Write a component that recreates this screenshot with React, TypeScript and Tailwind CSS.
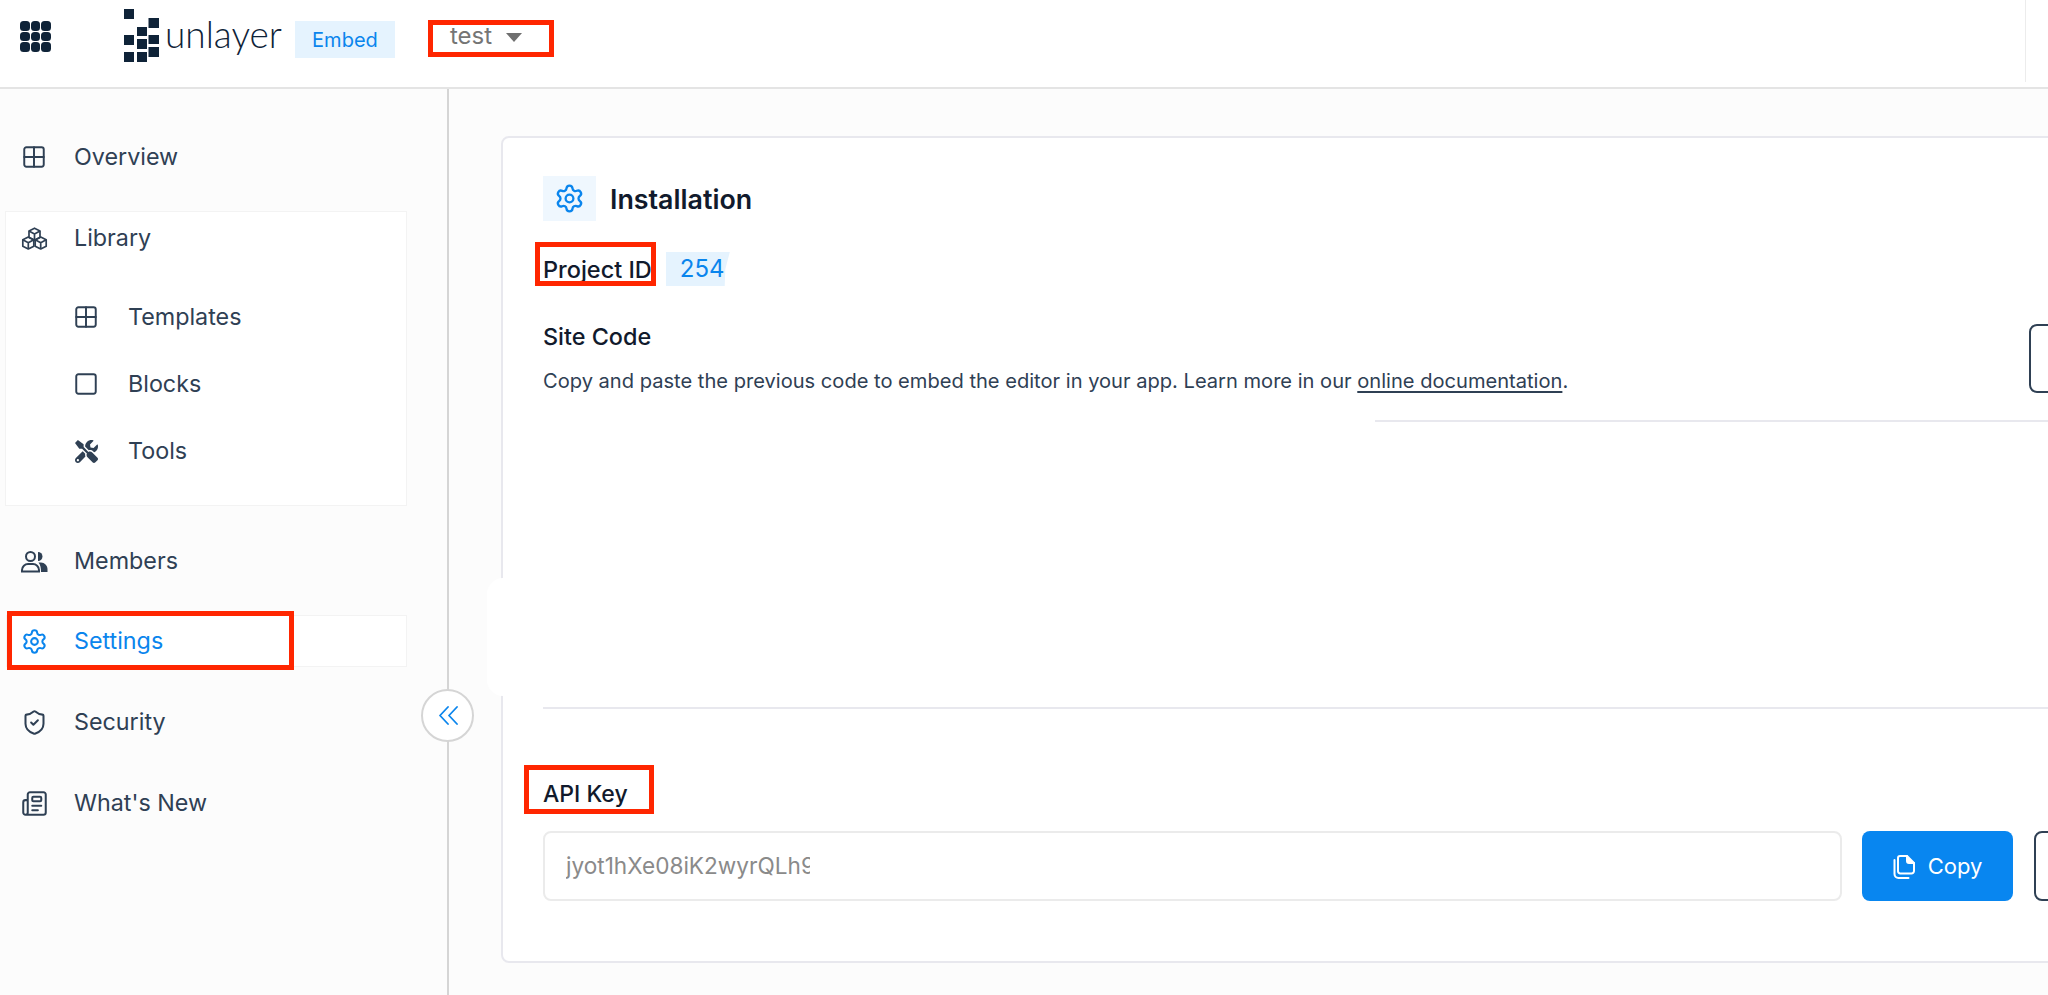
import { Grid2x2, Square, Settings, ShieldCheck, Newspaper } from "lucide-react";
import { FaTools } from "react-icons/fa";
import type { ReactNode } from "react";

function Row({ icon, label, active, sub }: { icon: ReactNode; label: string; active?: boolean; sub?: boolean }) {
  return (
    <div className={`flex items-center h-[52px] ${sub ? "pl-[68px] gap-[30px]" : active ? "pl-[15px] gap-[28px] -mt-px" : "pl-[16px] gap-[28px]"} ${active ? "text-[#0a85ed] bg-white border border-[#f3f3f3]" : "text-[#2f4054]"}`}>
      <span className="w-[24px] h-[24px] flex items-center justify-center shrink-0 [&>svg]:shrink-0">{icon}</span>
      <span className="text-[23.300px] leading-[28px]">{label}</span>
    </div>
  );
}

function MembersIcon() {
  return (
    <svg width="27" height="23" viewBox="0 0 27 23" fill="none" stroke="currentColor" strokeWidth="2">
      <circle cx="9.500" cy="6.500" r="4.500" />
      <path d="M1 21.500v-1.500c0-3.500 3-6 6-6h5c3 0 6 2.500 6 6v1.500z" />
      <path d="M17 2a4.500 4.500 0 0 1 0 9z" fill="currentColor" stroke="none" />
      <path d="M17.500 12.500h2.500c3.500 0 6.500 3 6.500 6.500v3H20c0-4-.500-7-2.500-9.500z" fill="currentColor" stroke="none" />
    </svg>
  );
}

function CubesIcon() {
  const centers = [[13.500, 7.200], [7.300, 16], [19.700, 16]];
  return (
    <svg width="27" height="23" viewBox="0 0 27 23" fill="none" stroke="currentColor" strokeWidth="1.700" strokeLinejoin="round">
      {centers.map(([x, y], i) => (
        <g key={i}>
          <path d={`M${x} ${y - 6}l5.500 2.800v6.400l-5.500 2.800-5.500-2.800v-6.400z`} />
          <path d={`M${x - 5.500} ${y - 3.200}l5.500 2.900 5.500-2.900M${x} ${y - 0.300}v6.300`} />
        </g>
      ))}
    </svg>
  );
}

function ChevronsIcon() {
  return (
    <svg width="20" height="19" viewBox="0 0 20 19" fill="none" stroke="currentColor" strokeWidth="1.800" strokeLinecap="round" strokeLinejoin="round" className="shrink-0">
      <path d="M10 1L2 9.500l8 8.500" />
      <path d="M19 1l-8 8.500 8 8.500" />
    </svg>
  );
}

function CopyIcon() {
  return (
    <svg width="22" height="25" viewBox="0 0 22 25" fill="none" stroke="currentColor" strokeWidth="2" strokeLinejoin="round" strokeLinecap="round" className="shrink-0">
      <path d="M7 2h7l7 7v8a2.500 2.500 0 0 1-2.500 2.500h-11.500A2.500 2.500 0 0 1 5 17V4a2 2 0 0 1 2-2z" />
      <path d="M14 2v5a2 2 0 0 0 2 2h5" fill="currentColor" />
      <path d="M1.500 6v14a4 4 0 0 0 4 4h10" />
    </svg>
  );
}

function Logo() {
  const squares = [
    [124, 9, 10, 10], [148.500, 18, 10.500, 10], [137, 27, 10, 9], [148.500, 35, 10.500, 9],
    [124, 35, 10, 10], [137, 39, 10, 10], [148.500, 47, 10.500, 10], [124, 52, 10, 10], [137, 52, 10, 10],
  ];
  return (
    <svg width="36" height="53" viewBox="124 9 36 53" className="shrink-0" fill="#0f2338">
      {squares.map((s, i) => (
        <rect key={i} x={s[0]} y={s[1]} width={s[2]} height={s[3]} />
      ))}
    </svg>
  );
}

export default function App() {
  return (
    <div className="relative h-[995px] w-[2048px] overflow-hidden bg-[#fcfcfc] font-['Inter',sans-serif]">
      <header className="h-[89px] bg-white border-b-2 border-[#e4e4e4] flex items-start relative">
        <div className="grid grid-cols-3 gap-[1px] w-[31px] ml-[20px] mt-[21px]">
          {Array.from({ length: 9 }).map((_, i) => (
            <span key={i} className="w-[9.500px] h-[9.500px] rounded-[3.500px] bg-[#0f2338]" />
          ))}
        </div>
        <div className="ml-[73px] mt-[9px]"><Logo /></div>
        <span className="ml-[5px] mt-[10px] text-[37px] leading-[48px] font-['Lato',sans-serif] font-light text-[#0f2338]">unlayer</span>
        <span className="ml-[13px] mt-[21px] w-[100px] h-[37px] bg-[#e5f3fe] text-[#0a85ed] text-[20px] flex items-center justify-center">Embed</span>
        <span className="ml-[55px] mt-[20px] text-[24px] leading-[32px] text-[#757575]">test</span>
        <span className="ml-[14px] mt-[33px] w-0 h-0 border-l-[8px] border-r-[8px] border-t-[9px] border-l-transparent border-r-transparent border-t-[#6f6f6f]" />
        <span className="absolute left-[2025px] top-0 h-[82px] w-px bg-[#ececec]" />
      </header>

      <div className="flex h-[906px]">
        <aside className="w-[449px] shrink-0 border-r-2 border-[#d5d5d5] pt-[42px] pl-[6px] pr-[40px] flex flex-col gap-[29px]">
          <Row icon={<Grid2x2 size={26} strokeWidth={1.800} />} label="Overview" />
          <div className="h-[295px] -mt-px bg-white border border-[#f3f3f3] -ml-px">
            <Row icon={<CubesIcon />} label="Library" />
            <div className="mt-[27px] flex flex-col gap-[15px]">
              <Row sub icon={<Grid2x2 size={26} strokeWidth={1.800} />} label="Templates" />
              <Row sub icon={<Square size={26} strokeWidth={1.800} />} label="Blocks" />
              <Row sub icon={<FaTools size={23} />} label="Tools" />
            </div>
          </div>
          <Row icon={<MembersIcon />} label="Members" />
          <Row active icon={<Settings size={27} strokeWidth={1.800} />} label="Settings" />
          <Row icon={<ShieldCheck size={27} strokeWidth={1.800} />} label="Security" />
          <Row icon={<Newspaper size={27} strokeWidth={1.800} />} label="What's New" />
        </aside>

        <main className="flex-1 min-w-0 pl-[52px] pt-[47px]">
          <section className="w-[1700px] h-[827px] bg-white border-2 border-[#e8e8ee] rounded-[8px] pl-[40px] pt-[38px]">
            <div className="flex items-center gap-[14px]">
              <span className="w-[53px] h-[45px] bg-[#eff7fe] flex items-center justify-center text-[#0a85ed]">
                <Settings size={31} strokeWidth={1.800} />
              </span>
              <h1 className="text-[26.800px] leading-[32px] mt-[1px] font-semibold text-[#111a2c]">Installation</h1>
            </div>
            <div className="mt-[31px] flex items-center gap-[14px] h-[34px]">
              <span className="text-[23.500px] mt-[2px] font-medium text-[#111a2c]">Project ID</span>
              <span className="w-[64px] h-[34px] bg-[#e5f3fe] text-[#0a85ed] text-[24px] pl-[14px] flex items-center [clip-path:polygon(0_0,100%_0,93%_50%,92%_100%,0_100%)]">254</span>
            </div>
            <div className="mt-[37px] flex justify-between">
              <div>
                <h2 className="text-[23.400px] leading-[28px] font-medium text-[#111a2c]">Site Code</h2>
                <p className="mt-[16px] text-[20.100px] leading-[28px] text-[#2f4054]">
                  Copy and paste the previous code to embed the editor in your app. Learn more in our{" "}
                  <span className="underline underline-offset-[3px]">online documentation</span>.
                </p>
              </div>
              <span className="w-[100px] h-[69px] border-2 border-[#2f4054] rounded-[8px] mr-[70px] mt-px" />
            </div>
            <div className="mt-[25px] ml-[832px] h-[2px] bg-[#e8e8ee]" />
            <div className="mt-[285px] h-[2px] bg-[#e8e8ee]" />
            <h2 className="mt-[71px] text-[23px] leading-[28px] font-medium text-[#111a2c]">API Key</h2>
            <div className="mt-[23px] flex items-center gap-[20px]">
              <div className="w-[1299px] h-[70px] border-2 border-[#ebebeb] rounded-[8px] pl-[21px] flex items-center">
                <span className="block w-[244px] overflow-hidden whitespace-nowrap text-[22.600px] text-[#8a8a8a]">jyot1hXe08iK2wyrQLh9xTqLm</span>
              </div>
              <button className="w-[151px] h-[70px] rounded-[8px] bg-[#0886f0] text-white text-[22px] flex items-center justify-center gap-[13px]">
                <CopyIcon />
                Copy
              </button>
              <span className="w-[100px] h-[70px] border-2 border-[#2f4054] rounded-[8px] ml-px shrink-0" />
            </div>
          </section>
        </main>
      </div>

      <span className="absolute left-[487px] top-[578px] w-[17px] h-[118px] bg-white rounded-l-[16px]" />
      <button className="absolute left-[421px] top-[689px] w-[53px] h-[53px] rounded-full bg-white border-2 border-[#d5d5d5] text-[#0a85ed] flex items-center justify-center">
        <ChevronsIcon />
      </button>

      <span className="absolute left-[428px] top-[20px] w-[126px] h-[37px] border-[5px] border-[#ff2600]" />
      <span className="absolute left-[535px] top-[242px] w-[121px] h-[44px] border-[5px] border-[#ff2600]" />
      <span className="absolute left-[7px] top-[611px] w-[287px] h-[59px] border-[5px] border-[#ff2600]" />
      <span className="absolute left-[524px] top-[765px] w-[130px] h-[49px] border-[5px] border-[#ff2600]" />
    </div>
  );
}
